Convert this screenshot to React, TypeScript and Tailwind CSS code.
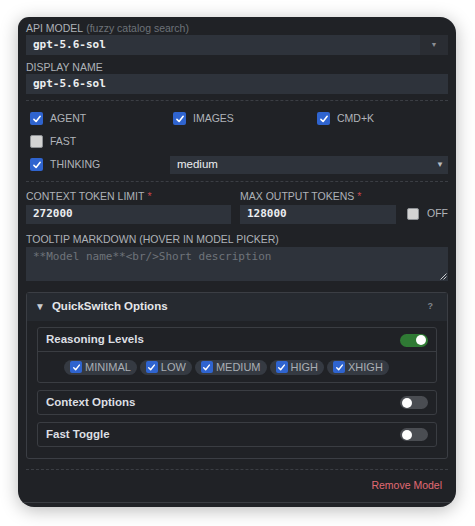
import React from 'react';

const sans = { fontFamily: '"Liberation Sans", Arial, sans-serif' };
const mono = { fontFamily: '"DejaVu Sans Mono", "Liberation Mono", monospace' };

const Box = ({ on, size = 13 }: { on: boolean; size?: number }) =>
  on ? (
    <span
      className="flex shrink-0 items-center justify-center rounded-[2px] bg-[#2f64cf]"
      style={{ width: size, height: size }}
    >
      <svg viewBox="0 0 12 12" width={size - 3} height={size - 3}>
        <path d="M2.3 6.4 4.9 9 9.8 2.8" stroke="#fff" strokeWidth="1.9" fill="none" strokeLinecap="round" strokeLinejoin="round" />
      </svg>
    </span>
  ) : (
    <span
      className="shrink-0 rounded-[2px] border border-[#8f9296] bg-[#d3d3d3]"
      style={{ width: size, height: size }}
    />
  );

const Toggle = ({ on }: { on: boolean }) => (
  <span
    className={
      on
        ? 'flex h-[13px] w-[28px] items-center justify-end rounded-full bg-[#2f7a34] px-[2px]'
        : 'flex h-[13px] w-[28px] items-center justify-start rounded-full bg-[#4a4d52] px-[2px]'
    }
  >
    <span className="h-[10px] w-[10px] rounded-full bg-white" />
  </span>
);

const Label = ({ children, required }: { children: React.ReactNode; required?: boolean }) => (
  <div className="flex h-[12px] items-center text-[10.5px] leading-none text-[#aeb2b8] uppercase">
    {children}
    {required && <span className="ml-[3px] text-[#c9464b]">*</span>}
  </div>
);

const Dashed = ({ className }: { className: string }) => (
  <div className={'border-t border-dashed border-[#3b3e44] ' + className} />
);

const Flag = ({ label, on }: { label: string; on: boolean }) => (
  <div className="flex items-center gap-[7px] pl-[4px]">
    <Box on={on} />
    <span className="text-[10.5px] text-[#b0b4ba]">{label}</span>
  </div>
);

const Chip = ({ label }: { label: string }) => (
  <div className="flex h-[15px] items-center gap-[3px] rounded-full bg-[#353a42] pr-[6px] pl-[6px]">
    <Box on size={12} />
    <span className="text-[11px] leading-none text-[#a9aeb4]">{label}</span>
  </div>
);

const Section = ({ title, on }: { title: string; on: boolean }) => (
  <div className="flex h-[25px] items-center justify-between rounded-[3px] border border-[#3a3d42] pt-[1px] pr-[8px] pl-[8px]">
    <span className="text-[11.5px] font-semibold text-[#dcdfe3]">{title}</span>
    <Toggle on={on} />
  </div>
);

export default function App() {
  return (
    <div className="min-h-[526px] bg-white pt-[17px] pl-[18px]" style={sans}>
      <div className="h-[490px] w-[438px] overflow-hidden rounded-[16px] rounded-tl-[11px] bg-[#202226] px-[8px] pt-[5px] shadow-[0_3px_18px_rgba(0,0,0,0.28)]">
        <Label>
          API Model <span className="ml-[3px] normal-case text-[#6d7279]">(fuzzy catalog search)</span>
        </Label>
        <div className="mt-[1px] flex h-[20px]">
          <div className="flex flex-1 items-center bg-[#2e333b] pl-[7px] text-[11px] font-bold text-[#eceef0]" style={mono}>
            gpt-5.6-sol
          </div>
          <div className="flex w-[28px] items-center justify-center bg-[#2a2d33] text-[7px] text-[#8a8e94]">▼</div>
        </div>

        <div className="mt-[6px]">
          <Label>Display Name</Label>
        </div>
        <div className="mt-[1px] flex h-[20px] items-center bg-[#2e333b] pl-[7px] text-[11px] font-bold text-[#eceef0]" style={mono}>
          gpt-5.6-sol
        </div>

        <Dashed className="mt-[6px]" />

        <div className="mt-[10px] grid grid-cols-[143px_144px_1fr] gap-y-[7px]">
          <Flag label="AGENT" on />
          <Flag label="IMAGES" on />
          <Flag label="CMD+K" on />
          <Flag label="FAST" on={false} />
        </div>
        <div className="mt-[6px] flex h-[18px] items-center">
          <div className="w-[144px]">
            <Flag label="THINKING" on />
          </div>
          <div className="flex h-[18px] flex-1 items-center justify-between bg-[#2e333b] pr-[4px] pl-[7px]">
            <span className="text-[11.5px] text-[#eceef0]">medium</span>
            <span className="text-[8px] text-[#b8bcc1]">▼</span>
          </div>
        </div>

        <Dashed className="mt-[7px]" />

        <div className="mt-[9px] flex gap-[9px]">
          <div className="w-[206px]">
            <Label required>Context Token Limit</Label>
            <div className="mt-[2px] flex h-[19px] items-center bg-[#2e333b] pl-[7px] text-[11px] font-bold text-[#eceef0]" style={mono}>
              272000
            </div>
          </div>
          <div className="flex-1">
            <Label required>Max Output Tokens</Label>
            <div className="mt-[2px] flex h-[19px] items-center">
              <div className="flex h-[19px] w-[156px] items-center bg-[#2e333b] pl-[7px] text-[11px] font-bold text-[#eceef0]" style={mono}>
                128000
              </div>
              <div className="ml-[11px] flex items-center gap-[8px]">
                <Box on={false} size={12} />
                <span className="text-[10.5px] text-[#b0b4ba]">OFF</span>
              </div>
            </div>
          </div>
        </div>

        <div className="mt-[10px]">
          <Label>Tooltip Markdown (hover in model picker)</Label>
        </div>
        <div className="relative mt-[1px] h-[34px] bg-[#2e333b] pt-[2px] pl-[7px] text-[11px] text-[#6e737a]" style={mono}>
          **Model name**&lt;br/&gt;Short description
          <svg className="absolute right-[1px] bottom-[1px]" width="7" height="7" viewBox="0 0 7 7">
            <path d="M6.5 0.5 0.5 6.5M6.5 3.5 3.5 6.5" stroke="#c9ccd0" strokeWidth="1" />
          </svg>
        </div>

        <div className="mt-[11px] h-[167px] rounded-[3px] border border-[#3b3e44]">
          <div className="flex h-[28px] items-center justify-between bg-[#262a30] pr-[14px] pl-[8px]">
            <div className="flex items-center gap-[7px]">
              <span className="text-[10px] text-[#c9ccd0]">▼</span>
              <span className="text-[11.5px] font-bold text-[#e4e6e9]">QuickSwitch Options</span>
            </div>
            <span className="text-[9px] font-bold text-[#80858b]">?</span>
          </div>
          <div className="flex flex-col gap-[7px] px-[10px] pt-[6px]">
            <div className="rounded-[3px] border border-[#3a3d42]">
              <div className="flex h-[24px] items-center justify-between border-b border-[#3a3d42] pt-[2px] pr-[8px] pl-[8px]">
                <span className="text-[11.5px] font-semibold text-[#dcdfe3]">Reasoning Levels</span>
                <Toggle on />
              </div>
              <div className="flex h-[30px] items-center gap-[3px] pt-[1px] pl-[26px]">
                <Chip label="MINIMAL" />
                <Chip label="LOW" />
                <Chip label="MEDIUM" />
                <Chip label="HIGH" />
                <Chip label="XHIGH" />
              </div>
            </div>
            <Section title="Context Options" on={false} />
            <Section title="Fast Toggle" on={false} />
          </div>
        </div>

        <Dashed className="mt-[10px]" />

        <div className="flex h-[32px] items-center justify-end pr-[6px]">
          <span className="text-[10.5px] text-[#e06a74]">Remove Model</span>
        </div>
        <div className="-mx-[8px] border-t border-[#3a3d42]" />
      </div>
    </div>
  );
}
